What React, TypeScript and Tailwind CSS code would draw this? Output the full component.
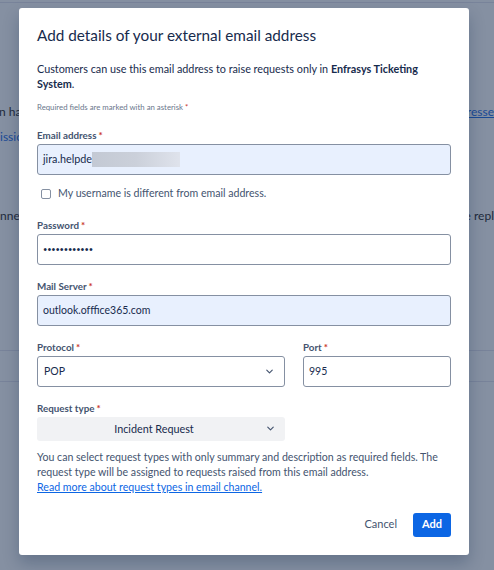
import { ChevronDown } from 'lucide-react';

function Label({ text }: { text: string }) {
  return (
    <div className="text-[9.8px] font-bold text-[#44546f] leading-none mb-[3px]">
      {text}
      <span className="text-[#c9372c] ml-[2px]">*</span>
    </div>
  );
}

export default function App() {
  return (
    <div
      className="relative w-[494px] h-[570px] overflow-hidden bg-[#8590a2] text-[#172b4d]"
      style={{ fontFamily: 'Lato, "Noto Sans", sans-serif' }}
    >
      {/* page behind the blanket */}
      <div className="flex flex-col text-[12px] text-[#1e2a3c]">
        <div className="h-[3px] border-b border-[#78839a]" />
        <div className="h-[100px]" />
        <div className="flex justify-between leading-[18px]">
          <span className="-ml-[1px]">n ha</span>
          <span className="text-[#1a4a96] underline">ddresse</span>
        </div>
        <div className="leading-[18px] mt-[7px] text-[#1a4a96]">issio</div>
        <div className="h-[61px]" />
        <div className="flex justify-between leading-[18px]">
          <span>nnels</span>
          <span>e repl</span>
        </div>
        <div className="h-[125px]" />
        <div className="border-t border-[#78839a] h-[31px]" />
        <div className="border-t border-[#78839a]" />
      </div>

      {/* modal */}
      <div className="absolute top-[8px] left-[19px] w-[450px] h-[547px] bg-white rounded-[3px] shadow-[0_8px_16px_rgba(9,30,66,0.25)] px-[18px] pt-[17px]">
        <h1 className="text-[15.3px] leading-[20px] text-[#172b4d] font-normal">
          Add details of your external email address
        </h1>

        <div className="mt-[16px] text-[10.8px] leading-[15px] text-[#172b4d]">
          <div>
            Customers can use this email address to raise requests only in{' '}
            <b className="font-bold">Enfrasys Ticketing</b>
          </div>
          <div>
            <b className="font-bold">System</b>.
          </div>
        </div>

        <div className="mt-[13px] text-[7.8px] leading-none text-[#6b778c]">
          Required fields are marked with an asterisk
          <span className="text-[#c9372c] ml-[2px]">*</span>
        </div>

        <div className="mt-[19px]">
          <Label text="Email address" />
          <div className="h-[31px] border border-[#8590a2] rounded-[3px] bg-[#e8f0fe] flex items-center px-[5px] text-[10.8px]">
            <span>jira.helpde</span>
            <span className="w-[88px] h-[15px] bg-gradient-to-r from-[#c3c9d4] via-[#cbd0da] to-[#dfe3ec]" />
          </div>
        </div>

        <label className="mt-[11px] flex items-center gap-[7px] pl-[4px] text-[10.6px] text-[#44546f]">
          <span className="w-[10px] h-[10px] border border-[#8590a2] rounded-[2px] bg-white" />
          My username is different from email address.
        </label>

        <div className="mt-[20px]">
          <Label text="Password" />
          <div className="h-[31px] border border-[#8590a2] rounded-[3px] bg-white flex items-center px-[5px] text-[7.5px] tracking-[-0.2px]">
            ••••••••••••
          </div>
        </div>

        <div className="mt-[17px]">
          <Label text="Mail Server" />
          <div className="h-[31px] border border-[#8590a2] rounded-[3px] bg-[#e8f0fe] flex items-center px-[5px] text-[10.5px]">
            outlook.offfice365.com
          </div>
        </div>

        <div className="mt-[17px] flex gap-[18px]">
          <div className="w-[248px]">
            <Label text="Protocol" />
            <div className="h-[31px] border border-[#8590a2] rounded-[3px] bg-white flex items-center justify-between pl-[6px] pr-[9px] text-[10.5px]">
              <span>POP</span>
              <ChevronDown size={11} strokeWidth={2.5} className="text-[#44546f]" />
            </div>
          </div>
          <div className="flex-1">
            <Label text="Port" />
            <div className="h-[31px] border border-[#8590a2] rounded-[3px] bg-white flex items-center px-[5px] text-[10.5px]">
              995
            </div>
          </div>
        </div>

        <div className="mt-[17px] w-[248px]">
          <Label text="Request type" />
          <div className="h-[24px] rounded-[3px] bg-[#f1f2f4] flex items-center pr-[9px] text-[10.8px]">
            <span className="flex-1 text-center pl-[6px]">Incident Request</span>
            <ChevronDown size={11} strokeWidth={2.5} className="text-[#44546f]" />
          </div>
        </div>

        <p className="mt-[9px] text-[10.6px] leading-[15px] text-[#44546f]">
          You can select request types with only summary and description as required fields. The
          request type will be assigned to requests raised from this email address.
          <br />
          <a className="text-[#0c66e4] underline">Read more about request types in email channel.</a>
        </p>

        <div className="mt-[18px] flex justify-end items-center gap-[6px]">
          <button className="h-[24px] px-[10px] text-[11px] text-[#44546f]">Cancel</button>
          <button className="h-[24px] w-[38px] rounded-[3px] bg-[#0c66e4] text-white text-[11px] font-bold">
            Add
          </button>
        </div>
      </div>
    </div>
  );
}
